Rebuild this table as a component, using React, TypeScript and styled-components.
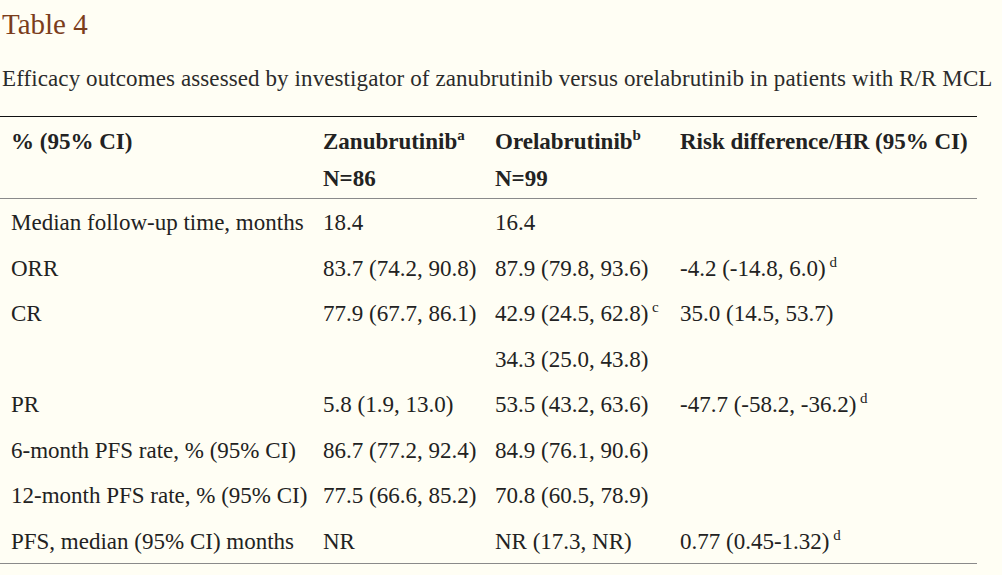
import React from 'react';
import styled, { createGlobalStyle } from 'styled-components';

const GlobalStyle = createGlobalStyle`
  html, body {
    margin: 0;
    padding: 0;
    background: #fffef4;
  }
  body {
    font-family: "Liberation Serif", "Times New Roman", serif;
    color: #222222;
  }
`;

interface Row {
  label: string;
  zanu: string;
  orela: string;
  orelaNote?: string;
  risk: string;
  riskNote?: string;
}

const rows: Row[] = [
  { label: 'Median follow-up time, months', zanu: '18.4', orela: '16.4', risk: '' },
  { label: 'ORR', zanu: '83.7 (74.2, 90.8)', orela: '87.9 (79.8, 93.6)', risk: '-4.2 (-14.8, 6.0)', riskNote: 'd' },
  { label: 'CR', zanu: '77.9 (67.7, 86.1)', orela: '42.9 (24.5, 62.8)', orelaNote: 'c', risk: '35.0 (14.5, 53.7)' },
  { label: '', zanu: '', orela: '34.3 (25.0, 43.8)', risk: '' },
  { label: 'PR', zanu: '5.8 (1.9, 13.0)', orela: '53.5 (43.2, 63.6)', risk: '-47.7 (-58.2, -36.2)', riskNote: 'd' },
  { label: '6-month PFS rate, % (95% CI)', zanu: '86.7 (77.2, 92.4)', orela: '84.9 (76.1, 90.6)', risk: '' },
  { label: '12-month PFS rate, % (95% CI)', zanu: '77.5 (66.6, 85.2)', orela: '70.8 (60.5, 78.9)', risk: '' },
  { label: 'PFS, median (95% CI) months', zanu: 'NR', orela: 'NR (17.3, NR)', risk: '0.77 (0.45-1.32)', riskNote: 'd' },
];

const Page = styled.div`
  padding: 6px 0 0 0;
`;

const Title = styled.h2`
  margin: 0 0 0 2px;
  font-size: 29px;
  font-weight: normal;
  line-height: 36px;
  color: #7b3d1c;
`;

const Caption = styled.p`
  margin: 23px 0 0 2px;
  font-size: 23px;
  line-height: 28px;
  letter-spacing: 0.1px;
  color: #2b2b2b;
  white-space: nowrap;
`;

const Table = styled.table`
  margin-top: 23px;
  width: 977px;
  border-collapse: collapse;
  table-layout: fixed;
  font-size: 23px;
  border-top: 1px solid #111111;
  border-bottom: 1px solid #8a8a8a;
`;

const Col = styled.col<{ $w: number }>`
  width: ${p => p.$w}px;
`;

const HeadCell = styled.th`
  padding: 6px 11px 1px;
  text-align: left;
  vertical-align: top;
  font-weight: bold;
  line-height: 37px;
  white-space: nowrap;
  border-bottom: 1px solid #8a8a8a;
`;

const Cell = styled.td`
  padding: 6px 11px 4px;
  line-height: 35.5px;
  white-space: nowrap;
  vertical-align: top;
`;

const Sup = styled.sup`
  font-size: 15px;
  line-height: 0;
  vertical-align: 9px;
`;

const App: React.FC = () => (
  <Page>
    <GlobalStyle />
    <Title>Table 4</Title>
    <Caption>
      Efficacy outcomes assessed by investigator of zanubrutinib versus orelabrutinib in patients with R/R MCL
    </Caption>
    <Table>
      <colgroup>
        <Col $w={312} />
        <Col $w={172} />
        <Col $w={185} />
        <Col $w={308} />
      </colgroup>
      <thead>
        <tr>
          <HeadCell>% (95% CI)</HeadCell>
          <HeadCell>
            Zanubrutinib<Sup>a</Sup>
            <br />
            N=86
          </HeadCell>
          <HeadCell>
            Orelabrutinib<Sup>b</Sup>
            <br />
            N=99
          </HeadCell>
          <HeadCell>Risk difference/HR (95% CI)</HeadCell>
        </tr>
      </thead>
      <tbody>
        {rows.map((r, i) => (
          <tr key={i}>
            <Cell>{r.label}</Cell>
            <Cell>{r.zanu}</Cell>
            <Cell>
              {r.orela}
              {r.orelaNote && <Sup> {r.orelaNote}</Sup>}
            </Cell>
            <Cell>
              {r.risk}
              {r.riskNote && <Sup> {r.riskNote}</Sup>}
            </Cell>
          </tr>
        ))}
      </tbody>
    </Table>
  </Page>
);

export default App;
